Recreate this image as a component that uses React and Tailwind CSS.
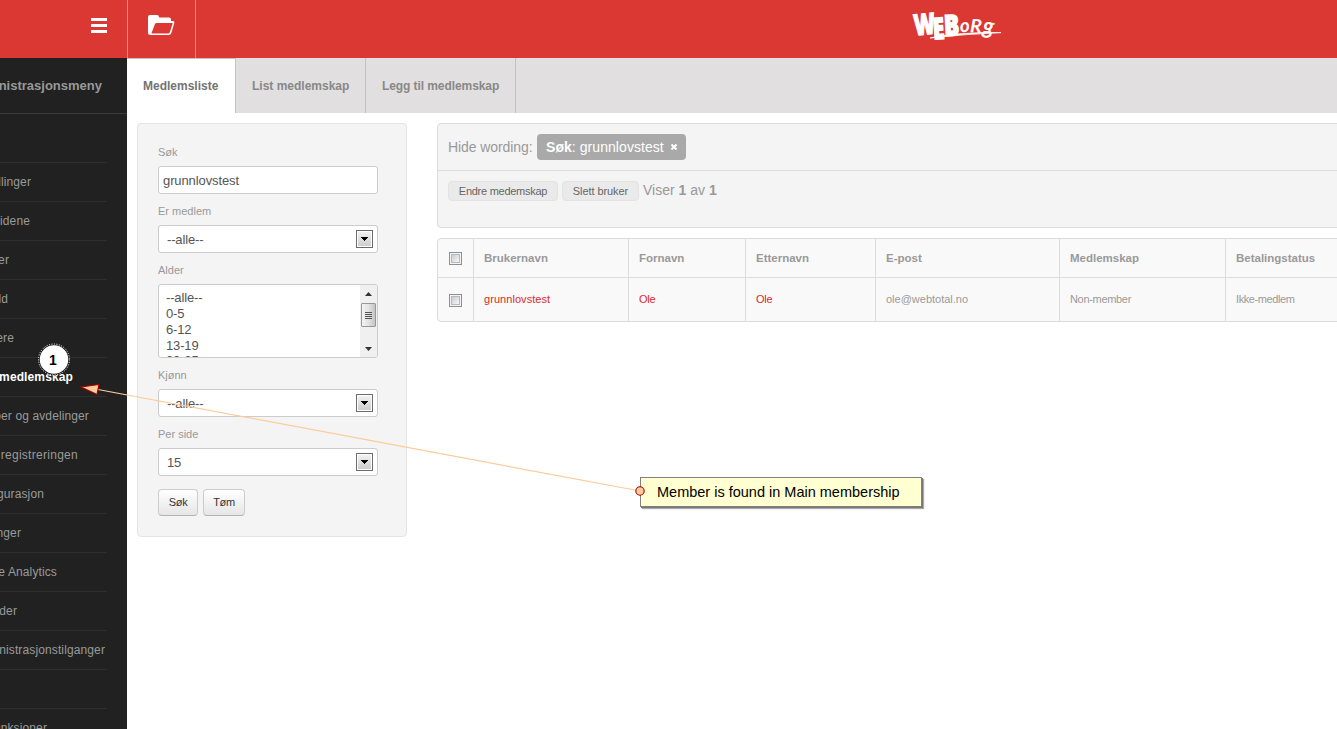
const menuItems = [
  { label: '', end: 0 },
  { label: 'Innstillinger', end: 31 },
  { label: 'Nettsidene', end: 30 },
  { label: 'Bilder', end: 9 },
  { label: 'Innhold', end: 8 },
  { label: 'Brukere', end: 14 },
  { label: 'Hovedmedlemskap', end: 73, active: true },
  { label: 'Grupper og avdelinger', end: 89 },
  { label: 'registreringen', end: 78, spacing: 'tracking-[0.28px]' },
  { label: 'Konfigurasjon', end: 44 },
  { label: 'Meldinger', end: 21 },
  { label: 'Google Analytics', end: 57 },
  { label: 'Kalender', end: 17 },
  { label: 'Administrasjonstilganger', end: 105 },
  { label: '', end: 0 },
  { label: 'Funksjoner', end: 47 },
]

const columns = [
  { title: 'Brukernavn', value: 'grunnlovstest', link: true, width: 'w-[155px]', spacing: 'tracking-[0.06px]' },
  { title: 'Fornavn', value: 'Ole', link: true, width: 'w-[117px]', spacing: 'tracking-[-0.2px]' },
  { title: 'Etternavn', value: 'Ole', link: true, width: 'w-[130px]', spacing: 'tracking-[-0.2px]' },
  { title: 'E-post', value: 'ole@webtotal.no', width: 'w-[184px]', spacing: 'tracking-normal' },
  { title: 'Medlemskap', value: 'Non-member', width: 'w-[166px]', spacing: 'tracking-[-0.32px]' },
  { title: 'Betalingstatus', value: 'Ikke-medlem', width: 'w-[150px]', spacing: 'tracking-[-0.4px]' },
]

export default function App() {
  return (
    <div className="relative w-[1337px] h-[729px] overflow-hidden bg-white font-['Liberation_Sans',Arial,sans-serif] text-[#999]">
      <TopBar />
      <div className="flex h-[671px]">
        <Sidebar />
        <main className="flex-1 min-w-0">
          <Tabs />
          <div className="flex items-start pt-[10px] pl-[10px] gap-[30px]">
            <FilterPanel />
            <div className="w-[910px] shrink-0">
              <Toolbar />
              <MemberTable />
            </div>
          </div>
        </main>
      </div>
      <Annotation />
    </div>
  )
}

function TopBar() {
  return (
    <header className="flex h-[58px] bg-[#dc3833]">
      <div className="w-[128px] shrink-0 flex flex-col items-end gap-[3px] pt-[18px] pr-[20px] border-r border-[#ee8a86]">
        <div className="w-4 h-[3px] bg-white" />
        <div className="w-4 h-[3px] bg-white" />
        <div className="w-4 h-[3px] bg-white" />
      </div>
      <div className="w-[68px] shrink-0 pt-[14px] pl-[20px] border-r border-[#ee8a86]">
        <svg width="28" height="22" viewBox="0 0 28 22">
          <path
            fillRule="evenodd"
            fill="#fff"
            d="M0 3Q0 1 2 1H9Q11 1 11 3V3.5H21Q23 3.5 23 5.5V7H25Q26.8 7 26.3 9L23.5 18.5Q22.8 21 20.5 21H2.5Q0 21 0 18.5ZM8.6 9Q7.4 9 7 10L3.6 18.7Q3.3 19.5 4 19.5H20Q21.4 19.5 21.9 18L24.5 10Q24.8 9 24 9Z"
          />
        </svg>
      </div>
      <div className="flex-1 pt-[8px] pl-[715px]">
        <Logo />
      </div>
    </header>
  )
}

function Logo() {
  return (
    <svg className="overflow-visible" width="94" height="40" viewBox="0 0 94 40" fill="#fff">
      <g className="font-['Open_Sans',sans-serif]" fontWeight="800" stroke="#fff" strokeWidth="1.4">
        <text transform="translate(4 27.5) rotate(-6) scale(.7 1)" fontSize="29">W</text>
        <text transform="translate(22.5 31.5) rotate(-4) scale(.7 1)" fontSize="30">E</text>
        <text transform="translate(33.5 28) rotate(-3) scale(.78 1)" fontSize="29">B</text>
      </g>
      <g className="font-['Lato',sans-serif]" fontStyle="italic" stroke="#fff" strokeWidth=".6">
        <text transform="translate(49.5 24) rotate(-4)" fontSize="18">o</text>
        <text transform="translate(59 24) rotate(3) scale(1.08 1)" fontSize="18">R</text>
        <text transform="translate(71.5 25) rotate(6)" fontSize="22">g</text>
      </g>
      <path d="M19 30Q48 24 90 24.6Q56 26 19 30Z" stroke="#fff" strokeWidth=".8" />
    </svg>
  )
}

function Sidebar() {
  return (
    <aside className="w-[127px] shrink-0 overflow-hidden bg-[#212121]">
      <div className="w-[102px] h-[55px] flex items-center justify-end whitespace-nowrap text-[13px] font-bold text-[#979998]">
        Administrasjonsmeny
      </div>
      <div className="h-px bg-[#3c3c3c]" />
      <div className="h-[10px]" />
      <nav className="w-[107px]">
        {menuItems.map((item, i) => (
          <div key={i} className="h-[39px] border-b border-[#2e2e2e]">
            <div
              style={{ width: item.end }}
              className={`h-[38px] flex items-center justify-end whitespace-nowrap text-[12px] ${
                item.active ? 'font-bold text-white' : 'text-[#999b99]'
              } ${item.spacing || 'tracking-[0.12px]'}`}
            >
              {item.label}
            </div>
          </div>
        ))}
      </nav>
    </aside>
  )
}

function Tabs() {
  return (
    <div className="flex h-[55px] bg-[#e1dfe0] text-[12px] font-bold text-[#888]">
      <div className="w-[109px] flex items-center pl-4 border-t border-r border-[#c4c2c3] bg-white text-[#737373]">Medlemsliste</div>
      <div className="w-[130px] flex items-center pl-4 pt-px border-r border-[#c4c2c3]">List medlemskap</div>
      <div className="w-[150px] flex items-center pl-4 pt-px border-r border-[#c4c2c3] tracking-[-0.08px]">Legg til medlemskap</div>
    </div>
  )
}

function FilterPanel() {
  return (
    <form className="w-[270px] h-[414px] shrink-0 px-5 pt-5 rounded border border-[#e5e5e5] bg-[#f4f4f4]">
      <Field label="Søk">
        <div className="h-7 flex items-center px-1 pt-[2px] rounded-[3px] border border-[#ccc] bg-white text-[13px] tracking-[-0.1px] text-[#555]">grunnlovstest</div>
      </Field>
      <Field label="Er medlem">
        <SelectBox value="--alle--" />
      </Field>
      <Field label="Alder">
        <AgeList />
      </Field>
      <Field label="Kjønn">
        <SelectBox value="--alle--" />
      </Field>
      <Field label="Per side">
        <SelectBox value="15" />
      </Field>
      <div className="flex gap-[5px] pt-[4px]">
        <FormButton width="w-10">Søk</FormButton>
        <FormButton width="w-[42px]">Tøm</FormButton>
      </div>
    </form>
  )
}

function Field({ label, children }) {
  return (
    <div className="w-[220px] mb-[9px]">
      <div className="h-[22px] pt-[1px] text-[11px] leading-[14px]">{label}</div>
      {children}
    </div>
  )
}

function SelectBox({ value }) {
  return (
    <div className="h-7 flex items-center justify-between pl-2 pr-1 rounded-[3px] border border-[#ccc] bg-white text-[13px] tracking-[-0.15px] text-[#555]">
      <span className="pt-[2px]">{value}</span>
      <span className="w-[17px] h-[18px] flex items-center justify-center border border-[#6b6b6b] bg-linear-to-b from-[#f4f4f4] to-[#cbcbcb] shadow-[inset_0_0_0_1px_#fff]">
        <svg width="7" height="4" viewBox="0 0 7 4" shapeRendering="crispEdges"><path d="M0 0h7L3.5 4z" /></svg>
      </span>
    </div>
  )
}

function AgeList() {
  return (
    <div className="h-[74px] flex justify-between rounded-[3px] border border-[#ccc] bg-white text-[13px] tracking-[-0.15px] text-[#555] overflow-hidden">
      <div className="pt-[5px] pl-[7px] leading-4">
        {['--alle--', '0-5', '6-12', '13-19'].map(age => (
          <div key={age}>{age}</div>
        ))}
        <div className="-mt-px">20-25</div>
      </div>
      <div className="w-[17px] pr-px flex flex-col items-center bg-[#f0f0f0]">
        <svg className="mt-[7px] mb-[7px]" width="7" height="4" viewBox="0 0 7 4"><path d="M0 4h7L3.5 0z" fill="#333" /></svg>
        <div className="w-[15px] h-6 shrink-0 flex flex-col items-center justify-center gap-px rounded-[1px] border border-[#979797] bg-linear-to-r from-[#f4f4f4] via-[#e2e2e2] to-[#c5c5c8]">
          <div className="w-[7px] h-px bg-[#555]" />
          <div className="w-[7px] h-px bg-[#555]" />
          <div className="w-[7px] h-px bg-[#555]" />
          <div className="w-[7px] h-px bg-[#555]" />
        </div>
        <svg className="mt-[20px]" width="7" height="4" viewBox="0 0 7 4"><path d="M0 0h7L3.5 4z" fill="#333" /></svg>
      </div>
    </div>
  )
}

function FormButton({ width, children }) {
  return (
    <button type="button" className={`${width} h-[27px] rounded border border-[#ccc] border-b-[#b3b3b3] bg-linear-to-b from-white to-[#e6e6e6] text-[11px] tracking-[-0.3px] text-[#333]`}>
      {children}
    </button>
  )
}

function Toolbar() {
  return (
    <div className="h-[105px] rounded border border-[#dcdcdc] bg-[#f4f4f4] text-[14px]">
      <div className="h-[47px] flex items-center gap-1 pl-[10px] border-b border-[#dcdcdc]">
        <span className="w-[85px] whitespace-nowrap tracking-[-0.08px]">Hide wording:</span>
        <span className="w-[149px] h-[26px] flex items-center pl-[9px] rounded bg-[#a9a9a9] text-white whitespace-nowrap tracking-[0.06px]">
          <b>Søk</b>:&nbsp;grunnlovstest
          <svg className="ml-[7px]" width="6" height="6" viewBox="0 0 6 6" stroke="#fff" strokeWidth="2"><path d="M.5.5l5 5M5.5.5l-5 5" /></svg>
        </span>
      </div>
      <div className="flex gap-1 pt-[10px] pl-[10px]">
        <button className="w-[110px] h-5 rounded border border-[#e3e3e3] bg-[#eaeaea] text-[11px] leading-[18px] tracking-[-0.27px] text-[#666]">Endre medemskap</button>
        <button className="w-[77px] h-5 rounded border border-[#e3e3e3] bg-[#eaeaea] text-[11px] leading-[18px] tracking-[-0.08px] text-[#666]">Slett bruker</button>
        <span className="leading-[18px]">Viser <b>1</b> av <b>1</b></span>
      </div>
    </div>
  )
}

function MemberTable() {
  return (
    <div className="mt-[10px] w-[960px] rounded border border-[#dcdcdc] bg-[#f9f9f9] text-[11px]">
      <div className="flex h-[39px] border-b border-[#dcdcdc] text-[11.5px] font-bold">
        <CheckCell />
        {columns.map(col => (
          <div key={col.title} className={`${col.width} shrink-0 flex items-center pl-[10px] pt-[2px] border-l border-[#dcdcdc]`}>
            {col.title}
          </div>
        ))}
      </div>
      <div className="flex h-[43px]">
        <CheckCell />
        {columns.map(col => (
          <div
            key={col.title}
            className={`${col.width} ${col.spacing} shrink-0 flex items-center pl-[10px] border-l border-[#dcdcdc] ${col.link ? 'text-[#dc2a2a]' : ''}`}
          >
            {col.value}
          </div>
        ))}
      </div>
    </div>
  )
}

function CheckCell() {
  return (
    <div className="w-[35px] shrink-0 flex items-center pl-[11px] pt-px">
      <div className="w-[13px] h-[13px] border border-[#8e8f8f] bg-[#f4f4f4] p-px">
        <div className="w-full h-full border border-[#b6bac0] bg-linear-to-br from-[#c9cdd2] to-[#f6f6f6]" />
      </div>
    </div>
  )
}

// Numbered marker, arrow and note lying over the page
function Annotation() {
  return (
    <>
      <svg className="absolute left-0 top-0" width="1337" height="729" viewBox="0 0 1337 729">
        <path d="M98 389.5L640 491" stroke="#fdcb9b" strokeWidth="1.2" />
        <path d="M81 387L99 384.5L97 394.5Z" fill="#fdcb9b" stroke="#a00000" strokeWidth="1.2" />
        <circle cx="54" cy="359.5" r="15" fill="#fff" stroke="#222" strokeWidth="1.5" />
        <circle cx="54" cy="359.5" r="15.5" fill="none" stroke="#fff" strokeWidth="1" strokeDasharray="1 1.5" />
      </svg>
      <div className="absolute left-[38px] top-[345px] w-[30px] h-[30px] flex items-center justify-center text-[14px] font-bold text-black">1</div>
      <div className="absolute left-[640px] top-[477px] w-[282px] h-[30px] flex items-center pl-4 pt-[2px] border border-[#808080] bg-[#ffffd2] shadow-[1px_1px_0_#777,2px_2px_1px_#aaa] text-[14.5px] text-black whitespace-nowrap">
        Member is found in Main membership
      </div>
      <svg className="absolute left-[635px] top-[486px]" width="10" height="10" viewBox="0 0 10 10">
        <circle cx="5" cy="5" r="4.2" fill="#fdcb9b" stroke="#a00000" strokeWidth="1.1" />
      </svg>
    </>
  )
}
